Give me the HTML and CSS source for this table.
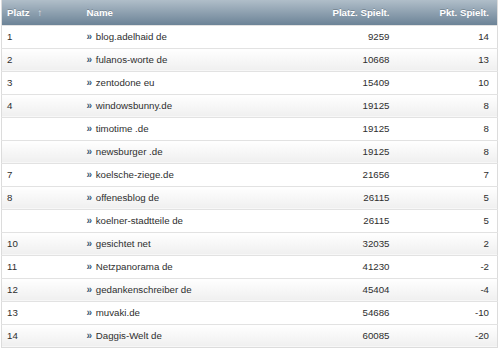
FILE: index.html
```
<!DOCTYPE html>
<html lang="de">

<head>
  <meta charset="UTF-8">
  <title>Rangliste</title>
  <link rel="stylesheet" href="styles.css">
</head>

<body>
  <table class="ranking">
    <thead>
      <tr>
        <th class="col-rank">Platz <span class="sort">&#x2191;</span></th>
        <th class="col-name">Name</th>
        <th class="col-num">Platz. Spielt.</th>
        <th class="col-pts">Pkt. Spielt.</th>
      </tr>
    </thead>
    <tbody>
      <tr><td>1</td><td><span class="arr">&raquo;</span> blog.adelhaid de</td><td class="num">9259</td><td class="num">14</td></tr>
      <tr><td>2</td><td><span class="arr">&raquo;</span> fulanos-worte de</td><td class="num">10668</td><td class="num">13</td></tr>
      <tr><td>3</td><td><span class="arr">&raquo;</span> zentodone eu</td><td class="num">15409</td><td class="num">10</td></tr>
      <tr><td>4</td><td><span class="arr">&raquo;</span> windowsbunny.de</td><td class="num">19125</td><td class="num">8</td></tr>
      <tr><td></td><td><span class="arr">&raquo;</span> timotime .de</td><td class="num">19125</td><td class="num">8</td></tr>
      <tr><td></td><td><span class="arr">&raquo;</span> newsburger .de</td><td class="num">19125</td><td class="num">8</td></tr>
      <tr><td>7</td><td><span class="arr">&raquo;</span> koelsche-ziege.de</td><td class="num">21656</td><td class="num">7</td></tr>
      <tr><td>8</td><td><span class="arr">&raquo;</span> offenesblog de</td><td class="num">26115</td><td class="num">5</td></tr>
      <tr><td></td><td><span class="arr">&raquo;</span> koelner-stadtteile de</td><td class="num">26115</td><td class="num">5</td></tr>
      <tr><td>10</td><td><span class="arr">&raquo;</span> gesichtet net</td><td class="num">32035</td><td class="num">2</td></tr>
      <tr><td>11</td><td><span class="arr">&raquo;</span> Netzpanorama de</td><td class="num">41230</td><td class="num">-2</td></tr>
      <tr><td>12</td><td><span class="arr">&raquo;</span> gedankenschreiber de</td><td class="num">45404</td><td class="num">-4</td></tr>
      <tr><td>13</td><td><span class="arr">&raquo;</span> muvaki.de</td><td class="num">54686</td><td class="num">-10</td></tr>
      <tr><td>14</td><td><span class="arr">&raquo;</span> Daggis-Welt de</td><td class="num">60085</td><td class="num">-20</td></tr>
    </tbody>
  </table>
</body>

</html>
```
FILE: styles.css
```
body {
  margin: 0;
  padding: 0;
  font-family: 'Liberation Sans', Arial, sans-serif;
  background-color: #ffffff;
}

.ranking {
  width: 497px;
  margin-left: 1px;
  table-layout: fixed;
  border-collapse: collapse;
  border: 1px solid #dcdcdc;
  border-top: none;
  font-size: 9.7px;
  color: #2e2e2e;
}

th,
td {
  padding: 0 8px 0 5px;
  white-space: nowrap;
  box-sizing: border-box;
}

th {
  height: 25px;
  background: linear-gradient(#b0bec9, #6c8397);
  color: #ffffff;
  font-weight: bold;
  text-align: left;
  text-shadow: 0 -1px 0 rgba(0, 0, 0, 0.2);
}

.col-rank {
  width: 80px;
}

.col-name {
  width: 219px;
}

.col-num {
  width: 97px;
  text-align: right;
}

.col-pts {
  text-align: right;
}

.sort {
  font-size: 10px;
  font-weight: bold;
  margin-left: 5px;
  color: #e6ebef;
}

td {
  height: 23px;
  border-top: 1px solid #e2e2e2;
}

tbody tr:nth-child(even) td {
  background: linear-gradient(#ffffff, #efefef);
}

.num {
  text-align: right;
}

.arr {
  color: #3c5a74;
  font-weight: bold;
  font-size: 10px;
  margin-right: 1px;
}
```
